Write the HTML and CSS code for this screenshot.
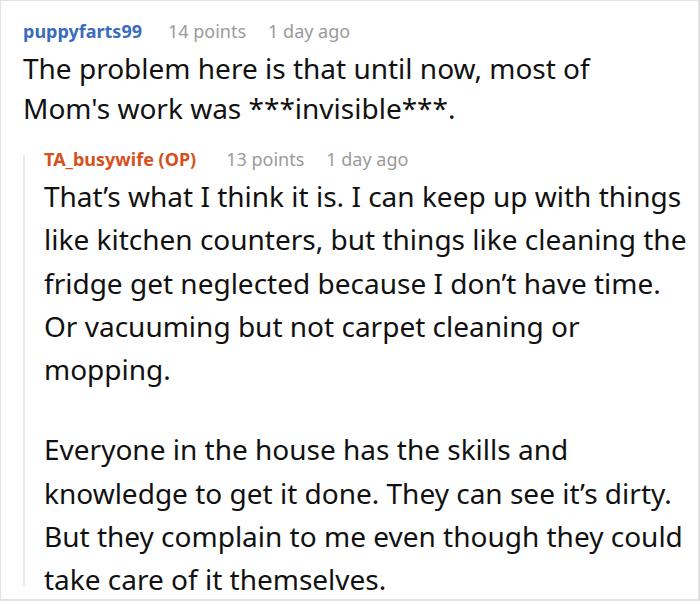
FILE: index.html
```html
<!DOCTYPE html>
<html>
<head>
<meta charset="utf-8">
<link rel="stylesheet" href="styles.css">
</head>
<body>
<div class="frame">
  <div class="comment">
    <div class="meta">
      <span class="user">puppyfarts99</span>
      <span class="info">14 points</span>
      <span class="info">1 day ago</span>
    </div>
    <div class="text">
      <p>The problem here is that until now, most of Mom's work was ***invisible***.</p>
    </div>
    <div class="reply">
      <div class="meta reply-meta">
        <span class="user op">TA_busywife (OP)</span>
        <span class="info">13 points</span>
        <span class="info">1 day ago</span>
      </div>
      <div class="text reply-text">
        <p>That’s what I think it is. I can keep up with things like kitchen counters, but things like cleaning the fridge get neglected because I don’t have time. Or vacuuming but not carpet cleaning or mopping.</p>
        <p>Everyone in the house has the skills and knowledge to get it done. They can see it’s dirty. But they complain to me even though they could take care of it themselves.</p>
      </div>
    </div>
  </div>
</div>
</body>
</html>
```
FILE: styles.css
```css
html, body {
  margin: 0;
  padding: 0;
  background: #fff;
}
.frame {
  width: 700px;
  height: 601px;
  box-sizing: border-box;
  border: 1px solid #e3e3e3;
  border-right-width: 2px;
  border-bottom-width: 2px;
  overflow: hidden;
  font-family: "Noto Sans", sans-serif;
  color: #111;
}
.comment {
  padding: 18px 0 0 22px;
}
.meta {
  display: flex;
  align-items: center;
  gap: 22px;
  font-size: 18px;
  line-height: 24px;
}
.user {
  font-weight: 700;
  color: #3a6cbc;
  margin-right: 4px;
}
.user.op {
  color: #d6501c;
  margin-right: 8px;
}
.info {
  color: #9a9a9a;
}
.text {
  width: 646px;
  font-size: 28px;
  line-height: 40px;
  margin-top: 5px;
}
.text p {
  margin: 0;
}
.reply {
  margin-top: 27px;
  height: 431px;
  border-left: 2px solid #e8e8e8;
  padding-left: 19px;
  box-sizing: border-box;
}
.reply-meta {
  line-height: 8px;
}
.reply-text {
  line-height: 43.3px;
  margin-top: 12px;
}
.reply-text p + p {
  margin-top: 37px;
}
```
